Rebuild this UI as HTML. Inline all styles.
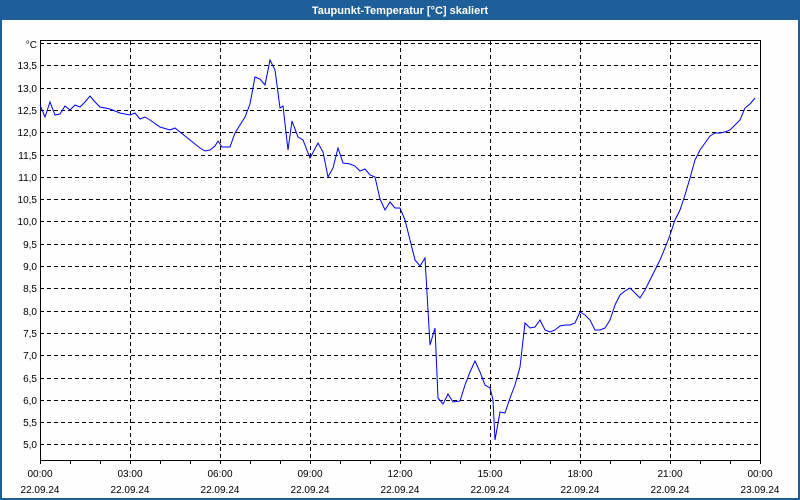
<!DOCTYPE html>
<html><head><meta charset="utf-8"><style>
body{margin:0;width:800px;height:500px;overflow:hidden;background:#fff;}
svg{display:block}
text{font-family:"Liberation Sans","DejaVu Sans",sans-serif;}
</style></head><body>
<svg width="800" height="500" xmlns="http://www.w3.org/2000/svg">
<rect x="0" y="0" width="800" height="500" fill="#fdfefd"/>
<rect x="0" y="0" width="800" height="20" fill="#1f5f99"/>
<rect x="0" y="19" width="2" height="481" fill="#1f5f99"/>
<rect x="798" y="19" width="2" height="481" fill="#1f5f99"/>
<rect x="0" y="498" width="800" height="2" fill="#1f5f99"/>
<text x="400" y="14" fill="#fff" font-size="11" font-weight="bold" text-anchor="middle">Taupunkt-Temperatur [°C] skaliert</text>
<g stroke="#000" stroke-width="1" stroke-dasharray="4,3" shape-rendering="crispEdges">
<line x1="40" y1="43.5" x2="760" y2="43.5"/>
<line x1="40" y1="65.5" x2="760" y2="65.5"/>
<line x1="40" y1="88.5" x2="760" y2="88.5"/>
<line x1="40" y1="110.5" x2="760" y2="110.5"/>
<line x1="40" y1="132.5" x2="760" y2="132.5"/>
<line x1="40" y1="155.5" x2="760" y2="155.5"/>
<line x1="40" y1="177.5" x2="760" y2="177.5"/>
<line x1="40" y1="199.5" x2="760" y2="199.5"/>
<line x1="40" y1="221.5" x2="760" y2="221.5"/>
<line x1="40" y1="244.5" x2="760" y2="244.5"/>
<line x1="40" y1="266.5" x2="760" y2="266.5"/>
<line x1="40" y1="288.5" x2="760" y2="288.5"/>
<line x1="40" y1="311.5" x2="760" y2="311.5"/>
<line x1="40" y1="333.5" x2="760" y2="333.5"/>
<line x1="40" y1="355.5" x2="760" y2="355.5"/>
<line x1="40" y1="378.5" x2="760" y2="378.5"/>
<line x1="40" y1="400.5" x2="760" y2="400.5"/>
<line x1="40" y1="422.5" x2="760" y2="422.5"/>
<line x1="40" y1="444.5" x2="760" y2="444.5"/>
<line x1="130.5" y1="41" x2="130.5" y2="460"/>
<line x1="220.5" y1="41" x2="220.5" y2="460"/>
<line x1="310.5" y1="41" x2="310.5" y2="460"/>
<line x1="400.5" y1="41" x2="400.5" y2="460"/>
<line x1="490.5" y1="41" x2="490.5" y2="460"/>
<line x1="580.5" y1="41" x2="580.5" y2="460"/>
<line x1="670.5" y1="41" x2="670.5" y2="460"/>
</g>
<g stroke="#000" stroke-width="1" shape-rendering="crispEdges">
<line x1="40.5" y1="40" x2="40.5" y2="464"/>
<line x1="40" y1="40.5" x2="760" y2="40.5"/>
<line x1="760.5" y1="40" x2="760.5" y2="464"/>
<line x1="40" y1="460.5" x2="761" y2="460.5"/>
<path d="M70.5 460v4M100.5 460v4M130.5 460v4M160.5 460v4M190.5 460v4M220.5 460v4M250.5 460v4M280.5 460v4M310.5 460v4M340.5 460v4M370.5 460v4M400.5 460v4M430.5 460v4M460.5 460v4M490.5 460v4M520.5 460v4M550.5 460v4M580.5 460v4M610.5 460v4M640.5 460v4M670.5 460v4M700.5 460v4M730.5 460v4"/>
</g>
<g font-size="10" fill="#000" text-anchor="end">
<text x="37" y="48">°C</text>
<text x="37" y="69">13,5</text><text x="37" y="92">13,0</text><text x="37" y="114">12,5</text>
<text x="37" y="136">12,0</text><text x="37" y="159">11,5</text><text x="37" y="181">11,0</text>
<text x="37" y="203">10,5</text><text x="37" y="225">10,0</text><text x="37" y="248">9,5</text>
<text x="37" y="270">9,0</text><text x="37" y="292">8,5</text><text x="37" y="315">8,0</text>
<text x="37" y="337">7,5</text><text x="37" y="359">7,0</text><text x="37" y="382">6,5</text>
<text x="37" y="404">6,0</text><text x="37" y="426">5,5</text><text x="37" y="448">5,0</text>
</g>
<g font-size="10" fill="#000" text-anchor="middle">
<text x="40" y="477">00:00</text><text x="40" y="493">22.09.24</text>
<text x="130" y="477">03:00</text><text x="130" y="493">22.09.24</text>
<text x="220" y="477">06:00</text><text x="220" y="493">22.09.24</text>
<text x="310" y="477">09:00</text><text x="310" y="493">22.09.24</text>
<text x="400" y="477">12:00</text><text x="400" y="493">22.09.24</text>
<text x="490" y="477">15:00</text><text x="490" y="493">22.09.24</text>
<text x="580" y="477">18:00</text><text x="580" y="493">22.09.24</text>
<text x="670" y="477">21:00</text><text x="670" y="493">22.09.24</text>
<text x="760" y="477">00:00</text><text x="760" y="493">23.09.24</text>
</g>
<polyline fill="none" stroke="#0000ee" stroke-width="1" points="40,105 45,117 50,102 55,115 60,114 65,106 70,110 75,105 80,107 85,102 90,96 95,102 100,107 110,109 120,113 130,115 135,113 140,119 145,117 150,120 160,127 170,130 175,128 180,132 190,140 200,148 205,151 210,150 215,146 218,141 222,147 230,147 235,133 240,125 245,117 250,104 255,77 260,79 265,85 270,60 275,70 280,108 283,106 288,150 292,121 298,137 303,140 310,158 318,143 323,152 328,177 333,168 338,148 343,163 350,164 355,166 360,171 365,169 370,175 375,177 380,199 385,210 390,202 395,208 400,208 405,220 410,240 415,260 420,266 425,258 430,345 435,328 438,398 443,404 448,394 453,402 460,401 465,385 470,372 475,361 480,372 485,385 490,388 493,400 495,440 500,412 505,413 510,398 515,385 520,367 525,323 530,328 535,327 540,320 545,330 550,332 555,330 560,326 565,325 570,325 575,323 580,312 585,315 590,320 595,330 600,330 605,328 610,320 615,305 620,295 625,291 630,288 635,293 640,298 645,290 650,280 655,270 660,260 665,248 670,235 675,220 680,210 685,195 690,178 695,160 700,150 705,143 710,136 715,133 720,133 725,132 730,130 735,125 740,120 745,108 750,104 755,98"/>
</svg>
</body></html>
